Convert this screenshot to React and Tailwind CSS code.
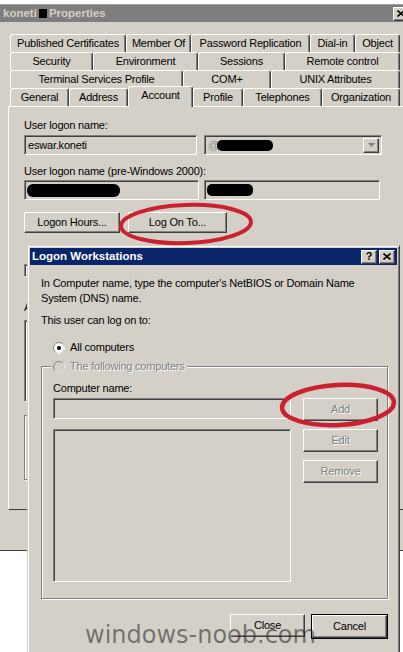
import React from "react";

const raised =
  "bg-[#d4d0c8] border border-t-white border-l-white border-r-[#404040] border-b-[#404040] shadow-[inset_-1px_-1px_0_#808080]";
const sunken =
  "border border-t-[#808080] border-l-[#808080] border-r-white border-b-white shadow-[inset_1px_1px_0_#404040,inset_-1px_-1px_0_#d4d0c8]";
const etched = "border border-[#808080] shadow-[inset_1px_1px_0_#fff,1px_1px_0_#fff]";
const dimText = "text-[#808080] [text-shadow:1px_1px_0_#fff]";

const tabRows = [
  [
    { label: "Published Certificates", w: "w-[116px]" },
    { label: "Member Of", w: "w-[65px]" },
    { label: "Password Replication", w: "w-[119px]" },
    { label: "Dial-in", w: "w-[45px]" },
    { label: "Object", w: "w-[45px]" },
  ],
  [
    { label: "Security", w: "w-[83px]" },
    { label: "Environment", w: "w-[105px]" },
    { label: "Sessions", w: "w-[87px]" },
    { label: "Remote control", w: "w-[115px]" },
  ],
  [
    { label: "Terminal Services Profile", w: "w-[173px]" },
    { label: "COM+", w: "w-[88px]" },
    { label: "UNIX Attributes", w: "w-[129px]" },
  ],
  [
    { label: "General", w: "w-[59px]" },
    { label: "Address", w: "w-[59px]" },
    { label: "Account", w: "w-[65px]", active: true },
    { label: "Profile", w: "w-[50px]" },
    { label: "Telephones", w: "w-[79px]" },
    { label: "Organization", w: "w-[78px]" },
  ],
];

function Tab({ tab }) {
  return (
    <div
      className={`flex items-center justify-center rounded-t-[3px] border-t border-l border-r border-t-white border-l-white border-r-[#404040] shadow-[inset_-1px_0_0_#808080] bg-[#d4d0c8] ${tab.w} ${
        tab.active ? "relative z-10 h-[21px] -mt-[2px] -mb-[1px] pb-[3px]" : "h-[18px]"
      }`}
    >
      {tab.label}
    </div>
  );
}

function CloseGlyph() {
  return (
    <svg width="8" height="7" viewBox="0 0 8 7">
      <path d="M0.5 0.5 L7.5 6.5 M7.5 0.5 L0.5 6.5" stroke="#000" strokeWidth="1.6" />
    </svg>
  );
}

function Radio({ checked, disabled }) {
  return (
    <svg width="12" height="12" viewBox="0 0 12 12" className="shrink-0">
      <circle cx="6" cy="6" r="5.5" fill={disabled ? "#d4d0c8" : "#fff"} stroke="#808080" />
      <path d="M9.9 2.1 A5.5 5.5 0 0 1 2.1 9.9" fill="none" stroke="#fff" />
      {checked && <circle cx="6" cy="6" r="2" fill="#000" />}
    </svg>
  );
}

function Button({ children, disabled, className = "" }) {
  return (
    <div className={`${raised} w-[75px] h-[23px] flex items-center justify-center ${className}`}>
      <span className={disabled ? dimText : ""}>{children}</span>
    </div>
  );
}

export default function App() {
  return (
    <div className="relative w-[403px] h-[652px] overflow-hidden bg-white font-['Liberation_Sans',Arial,sans-serif] text-[11px] tracking-[-0.2px] text-black">
      <div className="h-[5px] bg-white border-b border-[#a0a0a0]" />

      {/* back window: user properties */}
      <div className="w-[412px] h-[546px] bg-[#d4d0c8] border-b border-[#404040]">
        <div className="h-[17px] bg-[#807d7e] flex items-center pl-[3px] pr-[3px] text-[11.5px] font-bold tracking-normal text-[#d4d0c8]">
          <span>koneti</span>
          <span className="w-[8px] h-[9px] bg-black mx-[2px]" />
          <span>Properties</span>
          <div className={`${raised} ml-auto w-[16px] h-[14px] flex items-center justify-center`}>
            <CloseGlyph />
          </div>
        </div>

        <div className="mt-[12px] ml-[10px] w-[390px]">
          {tabRows.map((row, i) => (
            <div key={i} className="flex h-[18px] items-start">
              {row.map((t) => (
                <Tab key={t.label} tab={t} />
              ))}
            </div>
          ))}
        </div>

        <div className="ml-[8px] h-[404px] border-t border-l border-t-white border-l-white border-b border-b-[#404040] pl-[15px]">
          <div className="mt-[12px] leading-[13px]">User logon name:</div>
          <div className="mt-[3px] flex">
            <div className={`${sunken} w-[173px] h-[20px] flex items-center pl-[3px]`}>eswar.koneti</div>
            <div className={`${sunken} ml-[7px] w-[178px] h-[20px] flex items-center pl-[3px] pr-[2px]`}>
              <span className="text-[#909090]">@</span>
              <span className="-ml-[2px] w-[56px] h-[11px] rounded-[5px] bg-black" />
              <div className={`${raised} ml-auto w-[16px] h-[15px] flex items-center justify-center`}>
                <svg width="7" height="4" viewBox="0 0 7 4">
                  <path d="M0 0 H7 L3.5 4 Z" fill="#808080" />
                </svg>
              </div>
            </div>
          </div>
          <div className="mt-[10px] leading-[13px]">User logon name (pre-Windows 2000):</div>
          <div className="mt-[2px] flex">
            <div className={`${sunken} w-[175px] h-[20px] flex items-center pl-[2px]`}>
              <span className="w-[93px] h-[13px] rounded-[6px] bg-black" />
            </div>
            <div className={`${sunken} ml-[5px] w-[176px] h-[20px] flex items-center pl-[2px]`}>
              <span className="w-[46px] h-[12px] rounded-[5px] bg-black" />
            </div>
          </div>
          <div className="mt-[12px] flex">
            <div className={`${raised} w-[96px] h-[21px] flex items-center justify-center`}>Logon Hours...</div>
            <div className={`${raised} ml-[8px] w-[99px] h-[21px] flex items-center justify-center`}>Log On To...</div>
          </div>
          <div className="mt-[29px] flex items-center gap-[5px]">
            <span className={`${sunken} w-[13px] h-[13px] bg-white`} />
            <span>Unlock account</span>
          </div>
          <div className="mt-[22px] leading-[13px]">Account options:</div>
          <div className={`${sunken} mt-[6px] w-[356px] h-[82px] bg-white`} />
          <div className={`${etched} mt-[13px] w-[356px] h-[65px]`} />
        </div>
      </div>

      {/* front dialog: logon workstations */}
      <div className="absolute left-[27px] top-[245px] w-[373px] h-[420px] bg-[#d4d0c8] border border-t-[#d4d0c8] border-l-[#d4d0c8] border-r-[#404040] border-b-[#404040] shadow-[inset_1px_1px_0_#fff,inset_-1px_-1px_0_#808080] p-[2px]">
        <div className="h-[17px] bg-[#0a246a] flex items-center pl-[2px] pr-[2px]">
          <span className="text-[11.5px] font-bold tracking-normal text-white">Logon Workstations</span>
          <div className={`${raised} ml-auto w-[16px] h-[14px] flex items-center justify-center text-[11px] font-bold leading-none text-black`}>?</div>
          <div className={`${raised} ml-[2px] w-[16px] h-[14px] flex items-center justify-center`}>
            <CloseGlyph />
          </div>
        </div>

        <div className="pl-[11px]">
          <p className="mt-[11px] leading-[15px]">
            In Computer name, type the computer&apos;s NetBIOS or Domain Name
            <br />
            System (DNS) name.
          </p>
          <div className="mt-[7px] leading-[15px]">This user can log on to:</div>
          <div className="mt-[12px] ml-[12px] flex items-center gap-[5px] leading-[15px]">
            <Radio checked />
            <span>All computers</span>
          </div>

          <div className={`${etched} relative mt-[11px] w-[347px] pl-[11px] pt-[14px] pb-[16px]`}>
            <div className="absolute -top-[8px] left-[9px] bg-[#d4d0c8] px-[2px] flex items-center gap-[5px] leading-[15px]">
              <Radio disabled />
              <span className={dimText}>The following computers</span>
            </div>
            <div className="flex">
              <div className="w-[238px]">
                <div className="leading-[15px]">Computer name:</div>
                <div className={`${sunken} mt-[2px] h-[21px]`} />
                <div className={`${sunken} mt-[10px] h-[153px]`} />
              </div>
              <div className="ml-[12px] mt-[17px] flex flex-col gap-[8px]">
                <Button disabled>Add</Button>
                <Button disabled>Edit</Button>
                <Button disabled>Remove</Button>
              </div>
            </div>
          </div>

          <div className="mt-[15px] w-[347px] flex justify-end gap-[6px]">
            <Button>Close</Button>
            <div className="border border-black">
              <Button className="w-[73px] h-[21px]">Cancel</Button>
            </div>
          </div>
        </div>
      </div>

      {/* annotations over the screenshot */}
      <svg className="absolute inset-0 pointer-events-none" width="403" height="652">
        <ellipse cx="186" cy="224" rx="65" ry="19" fill="none" stroke="#cc2030" strokeWidth="4" transform="rotate(-2 186 224)" />
        <ellipse cx="338" cy="405" rx="56" ry="20" fill="none" stroke="#cc2030" strokeWidth="4.5" transform="rotate(-3 338 405)" />
      </svg>
      <div className="absolute left-[85px] top-[623px] font-['DejaVu_Sans',sans-serif] text-[24px] leading-none tracking-normal text-[rgba(30,30,30,0.55)]">
        windows-noob.com
      </div>
    </div>
  );
}
